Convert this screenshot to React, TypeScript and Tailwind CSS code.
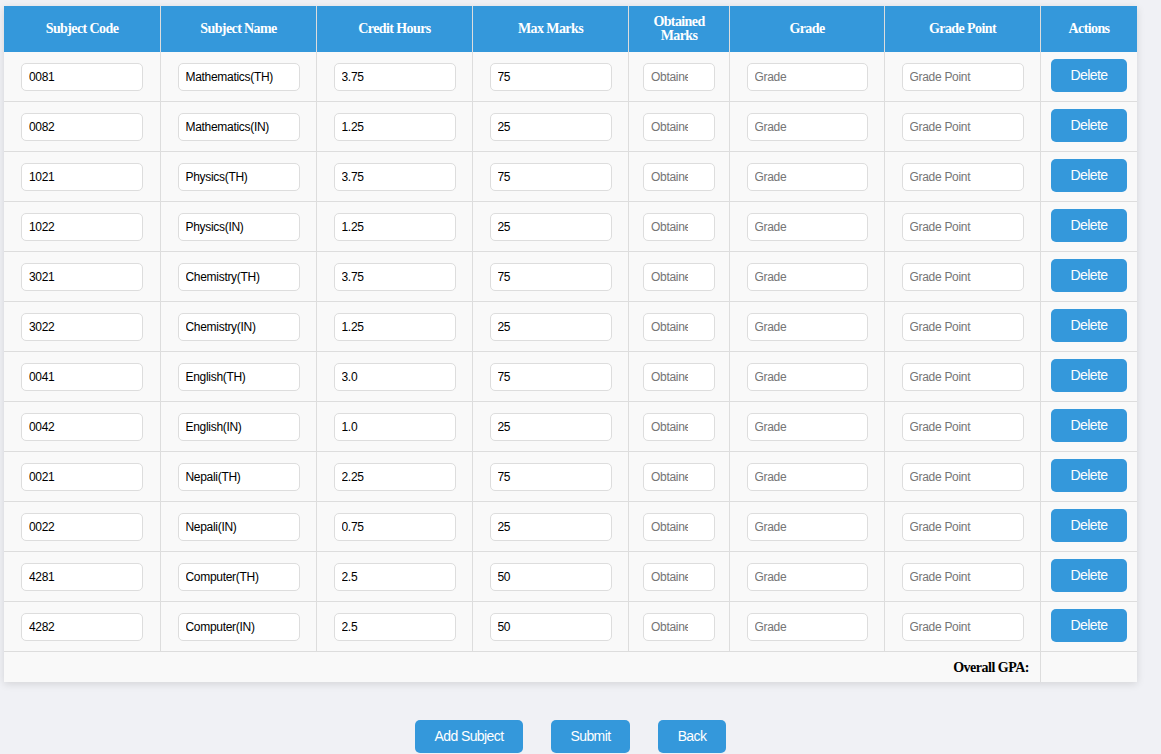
import React from "react";

const rows = [
  ["0081", "Mathematics(TH)", "3.75", "75"],
  ["0082", "Mathematics(IN)", "1.25", "25"],
  ["1021", "Physics(TH)", "3.75", "75"],
  ["1022", "Physics(IN)", "1.25", "25"],
  ["3021", "Chemistry(TH)", "3.75", "75"],
  ["3022", "Chemistry(IN)", "1.25", "25"],
  ["0041", "English(TH)", "3.0", "75"],
  ["0042", "English(IN)", "1.0", "25"],
  ["0021", "Nepali(TH)", "2.25", "75"],
  ["0022", "Nepali(IN)", "0.75", "25"],
  ["4281", "Computer(TH)", "2.5", "50"],
  ["4282", "Computer(IN)", "2.5", "50"],
];

const headers = [
  "Subject Code",
  "Subject Name",
  "Credit Hours",
  "Max Marks",
  "Obtained Marks",
  "Grade",
  "Grade Point",
  "Actions",
];

const inputCls =
  "h-[28px] rounded-[5px] border border-[#dddddd] bg-white px-[7px] text-[12px] tracking-[-0.3px] text-black placeholder:text-[#757575] outline-none font-['Liberation_Sans',Arial,sans-serif]";

function Cell({ children, last }: { children?: React.ReactNode; last?: boolean }) {
  return (
    <div
      className={`flex h-[50px] items-center justify-center border-b border-[#dddddd] bg-[#f9f9f9] ${
        last ? "" : "border-r"
      }`}
    >
      {children}
    </div>
  );
}

export default function App() {
  return (
    <div className="min-h-[754px] bg-[#f0f1f5] px-[4px] pt-[6px] font-['Liberation_Sans',Arial,sans-serif]">
      <div className="w-[1133px] bg-[#f9f9f9] shadow-[0_2px_8px_rgba(0,0,0,0.12)]">
        <div className="grid grid-cols-[157px_156px_156px_156px_101px_155px_156px_96px]">
          {headers.map((h, i) => (
            <div
              key={h}
              className={`flex h-[46px] items-center justify-center bg-[#3498db] px-[12px] pb-[1px] text-center font-['Liberation_Serif','Times_New_Roman',serif] text-[14px] font-bold leading-[14px] tracking-[-0.6px] text-white ${
                i < headers.length - 1 ? "border-r border-[#dddddd]" : ""
              }`}
            >
              {h}
            </div>
          ))}
          {rows.map((r) => (
            <React.Fragment key={r[0]}>
              <Cell>
                <input className={`${inputCls} w-[122px]`} defaultValue={r[0]} />
              </Cell>
              <Cell>
                <input className={`${inputCls} w-[122px]`} defaultValue={r[1]} />
              </Cell>
              <Cell>
                <input className={`${inputCls} w-[122px]`} defaultValue={r[2]} />
              </Cell>
              <Cell>
                <input className={`${inputCls} w-[122px]`} defaultValue={r[3]} />
              </Cell>
              <Cell>
                <input
                  className={`${inputCls} w-[72px] pr-[26px]`}
                  placeholder="Obtained Marks"
                />
              </Cell>
              <Cell>
                <input className={`${inputCls} w-[121px]`} placeholder="Grade" />
              </Cell>
              <Cell>
                <input className={`${inputCls} w-[122px]`} placeholder="Grade Point" />
              </Cell>
              <Cell last>
                <button className="mb-[2px] h-[33px] w-[76px] rounded-[5px] bg-[#3498db] text-[14px] tracking-[-0.6px] text-white">
                  Delete
                </button>
              </Cell>
            </React.Fragment>
          ))}
          <div className="col-span-7 flex h-[30px] items-center justify-end border-r border-[#dddddd] pr-[11px] font-['Liberation_Serif','Times_New_Roman',serif] text-[14px] font-bold tracking-[-0.5px] text-black">
            Overall GPA:
          </div>
          <div className="h-[30px]" />
        </div>
      </div>
      <div className="mt-[38px] flex w-[1133px] justify-center gap-[28px]">
        <button className="h-[33px] w-[108px] rounded-[5px] bg-[#3498db] text-[14px] tracking-[-0.6px] text-white">
          Add Subject
        </button>
        <button className="h-[33px] w-[79px] rounded-[5px] bg-[#3498db] text-[14px] tracking-[-0.6px] text-white">
          Submit
        </button>
        <button className="h-[33px] w-[68px] rounded-[5px] bg-[#3498db] text-[14px] tracking-[-0.6px] text-white">
          Back
        </button>
      </div>
    </div>
  );
}
